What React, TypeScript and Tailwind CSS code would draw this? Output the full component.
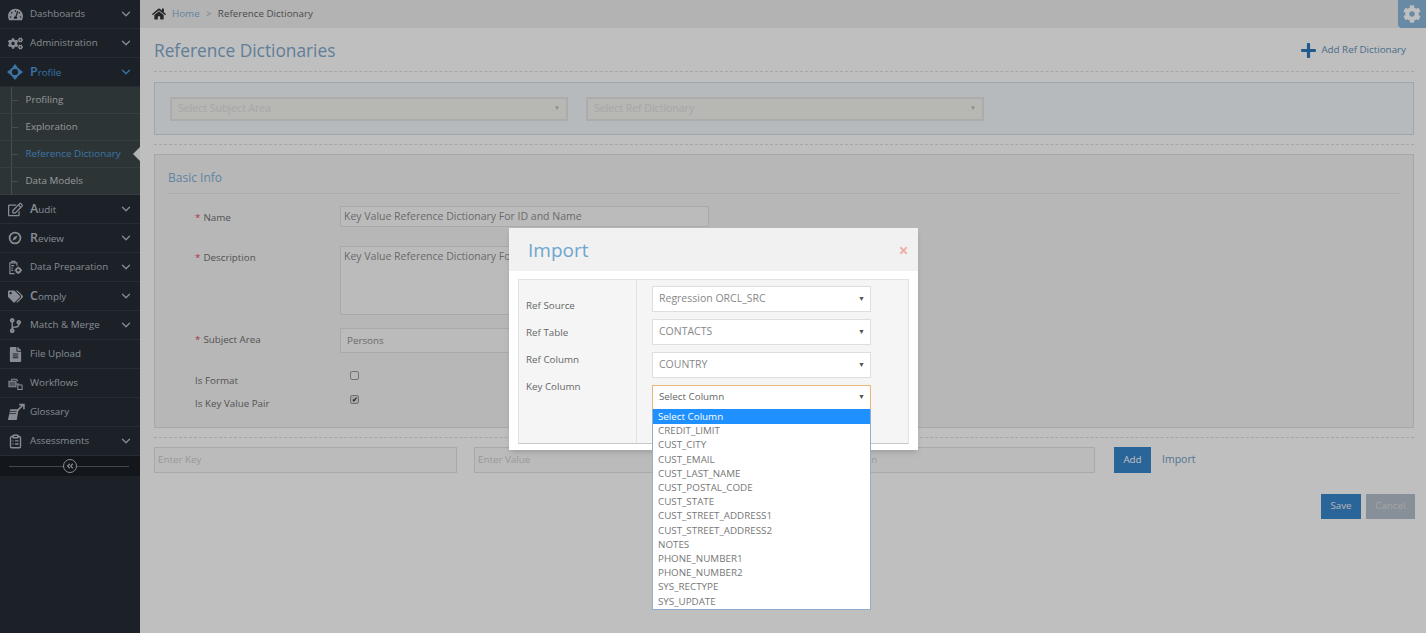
import { ChevronDown, ClipboardList } from 'lucide-react';
import {
  FaCodeBranch, FaCog, FaCogs, FaFileAlt, FaHome, FaPlus, FaRegEdit, FaTachometerAlt, FaTags, FaAngleDoubleLeft, FaTimes,
} from 'react-icons/fa';
import type { ReactNode } from 'react';

const font = { fontFamily: '"Open Sans", "Noto Sans", sans-serif' };

function ProfileIcon() {
  return (
    <svg viewBox="0 0 16 16" className="h-[16px] w-[16px] text-[#4f9bdc]" fill="none" stroke="currentColor">
      <circle cx="8" cy="8" r="4.200" strokeWidth="2.200" />
      <path d="M8 0 10.500 3h-5zM8 16l-2.500-3h5zM0 8l3-2.500v5zM16 8l-3 2.500v-5z" fill="currentColor" stroke="none" />
    </svg>
  );
}

function ReviewIcon() {
  return (
    <svg viewBox="0 0 16 16" className="h-[14px] w-[14px]" fill="none" stroke="currentColor">
      <circle cx="8" cy="8" r="6.200" strokeWidth="2" />
      <path d="M11 5 9.200 9.200 5 11l1.800-4.200z" fill="currentColor" stroke="none" />
    </svg>
  );
}

function DataPrepIcon() {
  return (
    <svg viewBox="0 0 16 16" className="h-[15px] w-[15px]" fill="none" stroke="currentColor" strokeWidth="1.200">
      <path d="M7 14.500H2V3h7.500v3" />
      <path d="M4 3V1.500h3.500V3" />
      <path d="M3.500 6h3M3.500 8.500h2M3.500 11h2" />
      <circle cx="11" cy="11" r="2.300" strokeWidth="2" />
      <path d="M11 7v1M11 14v1M7 11h1M14 11h1" strokeWidth="1.600" />
    </svg>
  );
}

function WorkflowIcon() {
  return (
    <svg viewBox="0 0 16 16" className="h-[15px] w-[15px]" fill="none" stroke="currentColor" strokeWidth="1.100">
      <path d="M1 5.500h7.500v6H1z" fill="currentColor" fillOpacity="0.5" />
      <path d="M4 5.500V3.500h5l1.500 2" />
      <path d="M10.500 9.500h4.500v5h-4.500z" />
      <path d="M8.500 8.500h3v1" />
    </svg>
  );
}

function GlossaryIcon() {
  return (
    <svg viewBox="0 0 18 18" className="h-[19px] w-[19px]" fill="none" stroke="currentColor">
      <path d="M4 6h8l-1.800 10H1.800z" fill="currentColor" stroke="none" />
      <path d="M3.500 8h6.500M3 10h6.500" stroke="#252c34" strokeWidth="0.700" />
      <path d="M11 7l5-5M12.500 1.500H17V6" strokeWidth="1.500" />
    </svg>
  );
}

function MenuItem({ icon, label, big, open, chevron = true }: { icon: ReactNode; label: string; big?: boolean; open?: boolean; chevron?: boolean }) {
  return (
    <div className={`flex h-[29px] items-center border-b border-[#333b44] pl-[4px] pr-[7px] ${open ? 'text-[#4f9bdc]' : 'text-[#b4bcc4]'}`}>
      <span className="flex w-[22px] justify-center text-[15px]">{icon}</span>
      <span className={`ml-[4px] flex-1 text-[9.800px] ${big ? 'first-letter:text-[12.500px] first-letter:font-semibold' : ''}`}>{label}</span>
      {chevron && <ChevronDown size={14} strokeWidth={2.200} />}
    </div>
  );
}

function SubItem({ label, active }: { label: string; active?: boolean }) {
  return (
    <div className={`relative flex h-[27px] items-center border-b border-[#4a5358] pl-[25.500px] text-[9.800px] ${active ? 'text-[#4f9bdc]' : 'text-[#c6cccc]'}`}>
      <span className="absolute left-[12px] top-[13px] h-px w-[6px] bg-[#5f686c]" />
      {label}
      {active && <span className="absolute right-0 top-[6px] border-y-[7px] border-r-[7px] border-y-transparent border-r-[#efefef]" />}
    </div>
  );
}

function FormRow({ label, required, className, children }: { label: string; required?: boolean; className: string; children: ReactNode }) {
  return (
    <div className={`flex items-start ${className}`}>
      <div className="w-[172px] pl-[27px] pt-[5px] text-[9.800px] text-[#6e6e6e]">
        {required && <span className="mr-[3px] text-[#e0455a]">*</span>}
        {label}
      </div>
      {children}
    </div>
  );
}

function ModalSelect({ value, focus }: { value: string; focus?: boolean }) {
  return (
    <div className={`flex w-[219px] items-center justify-between border bg-white pl-[6px] pr-[5px] ${focus ? 'h-[25px] border-[#e9b878] text-[9.800px] text-[#666]' : 'h-[26px] border-[#dedede] text-[10.500px] text-[#888]'}`}>
      {value}
      <span className="text-[7px] text-[#555]">▼</span>
    </div>
  );
}

const columns = [
  'CREDIT_LIMIT', 'CUST_CITY', 'CUST_EMAIL', 'CUST_LAST_NAME', 'CUST_POSTAL_CODE', 'CUST_STATE',
  'CUST_STREET_ADDRESS1', 'CUST_STREET_ADDRESS2', 'NOTES', 'PHONE_NUMBER1', 'PHONE_NUMBER2', 'SYS_RECTYPE', 'SYS_UPDATE',
];

export default function App() {
  return (
    <div className="relative flex h-[633px] w-[1426px] overflow-hidden bg-white" style={font}>
      <aside className="w-[140px] shrink-0 bg-[#252c34]">
        <MenuItem icon={<FaTachometerAlt />} label="Dashboards" />
        <MenuItem icon={<FaCogs />} label="Administration" />
        <MenuItem icon={<ProfileIcon />} label="Profile" big open />
        <div className="relative bg-[#3d4649]">
          <span className="absolute bottom-0 left-[11px] top-0 w-px bg-[#5f686c]" />
          <SubItem label="Profiling" />
          <SubItem label="Exploration" />
          <SubItem label="Reference Dictionary" active />
          <SubItem label="Data Models" />
        </div>
        <MenuItem icon={<FaRegEdit />} label="Audit" big />
        <MenuItem icon={<ReviewIcon />} label="Review" big />
        <MenuItem icon={<DataPrepIcon />} label="Data Preparation" />
        <MenuItem icon={<FaTags />} label="Comply" big />
        <MenuItem icon={<FaCodeBranch />} label="Match & Merge" />
        <MenuItem icon={<FaFileAlt />} label="File Upload" chevron={false} />
        <MenuItem icon={<WorkflowIcon />} label="Workflows" chevron={false} />
        <MenuItem icon={<GlossaryIcon />} label="Glossary" chevron={false} />
        <MenuItem icon={<ClipboardList size={15} strokeWidth={2.200} />} label="Assessments" />
        <div className="relative flex h-[20px] items-center justify-center bg-[#1a1e24]">
          <span className="absolute left-[9px] right-[11px] top-[10px] h-px bg-[#59616a]" />
          <span className="relative flex h-[14px] w-[14px] items-center justify-center rounded-full border border-[#b4bcc4] bg-[#1a1e24] text-[8px] text-[#b4bcc4]">
            <FaAngleDoubleLeft />
          </span>
        </div>
      </aside>

      <main className="min-w-0 flex-1">
        <div className="flex h-[28px] items-center bg-[#efefef] pl-[12px] text-[9.800px] text-[#666]">
          <FaHome className="text-[14px] text-[#333]" />
          <span className="ml-[6px] text-[#7fb0d8]">Home</span>
          <span className="mx-[6.500px] text-[9px] text-[#aaa]">&gt;</span>
          <span>Reference Dictionary</span>
          <span className="ml-auto flex h-[28px] w-[28px] items-center justify-center rounded-bl-[4px] bg-[#8db9dc] text-[18px] text-white">
            <FaCog />
          </span>
        </div>

        <div className="pl-[14px] pr-[12px]">
          <div className="flex h-[44px] items-center justify-between border-b border-dashed border-[#ddd] pt-[2px]">
            <h1 className="text-[17.300px] text-[#7fa9cc]">Reference Dictionaries</h1>
            <div className="flex items-center gap-[4px] pr-[8px] text-[9.800px] text-[#6390b5]">
              <FaPlus className="text-[17px] text-[#2c78bd]" />
              Add Ref Dictionary
            </div>
          </div>

          <div className="mt-[10px] flex h-[53px] items-center gap-[18px] border border-[#d5dee8] bg-[#f3f8fc] pl-[15px]">
            {['Select Subject Area', 'Select Ref Dictionary'].map((t) => (
              <div key={t} className="flex h-[24px] w-[398px] items-center justify-between border-2 border-[#e6e6e6] bg-[#f4f4f0] px-[6px] text-[10.500px] text-[#e0e0e0]">
                {t}
                <span className="text-[6px] text-[#bbb]">▼</span>
              </div>
            ))}
          </div>

          <div className="mt-[9px] h-[10px] border-t border-dashed border-[#ddd]" />

          <section className="h-[274px] border border-[#e0e0e0] bg-[#f5f5f5] px-[13px]">
            <h2 className="flex h-[39px] items-end border-b border-[#e5e5e5] pb-[6px] text-[12px] text-[#7fb0d8]">Basic Info</h2>
            <FormRow label="Name" required className="mt-[12px]">
              <div className="flex h-[21px] w-[369px] items-center border border-[#e2e2e2] bg-[#fafafa] px-[3px] text-[10.500px] text-[#8e8e8e]">Key Value Reference Dictionary For ID and Name</div>
            </FormRow>
            <FormRow label="Description" required className="mt-[19px]">
              <div className="h-[69px] w-[369px] border border-[#e2e2e2] bg-[#fafafa] px-[3px] pt-[2px] text-[10.500px] text-[#8e8e8e]">Key Value Reference Dictionary For ID and Name</div>
            </FormRow>
            <FormRow label="Subject Area" required className="mt-[13px]">
              <div className="flex h-[25px] w-[369px] items-center border border-[#e2e2e2] bg-[#fafafa] px-[6px] pt-[1px] text-[9.800px] text-[#8e8e8e]">Persons</div>
            </FormRow>
            <FormRow label="Is Format" className="mt-[16px]">
              <span className="ml-[10px] mt-[2px] h-[9px] w-[9px] rounded-[2px] border border-[#999] bg-[#f5f5f5]" />
            </FormRow>
            <FormRow label="Is Key Value Pair" className="mt-[3px]">
              <span className="ml-[10px] mt-[3px] flex h-[9px] w-[9px] items-center justify-center rounded-[2px] border border-[#999] bg-[#dcdcdc] text-[7px] leading-none text-[#222]">✔</span>
            </FormRow>
          </section>

          <div className="mt-[9px] flex items-center border-t border-dashed border-[#ddd] pt-[9px]">
            <div className="mr-[17px] flex h-[26px] w-[303px] items-center border border-[#e2e2e2] bg-[#fafafa] px-[3px] text-[9.800px] text-[#ccc]">Enter Key</div>
            <div className="mr-[17px] flex h-[26px] w-[303px] items-center border border-[#e2e2e2] bg-[#fafafa] px-[3px] text-[9.800px] text-[#ccc]">Enter Value</div>
            <div className="flex h-[26px] w-[301px] items-center border border-[#e2e2e2] bg-[#fafafa] px-[3px] text-[9.800px] text-[#ccc]">Enter Description</div>
            <button className="ml-[19px] h-[26px] w-[37px] bg-[#3987ce] text-[9.800px] text-white">Add</button>
            <span className="ml-[11px] text-[10.500px] text-[#6f9cc4]">Import</span>
          </div>

          <div className="mr-[-1px] mt-[21px] flex justify-end gap-[5px]">
            <button className="h-[25px] w-[40px] bg-[#3987ce] text-[9.800px] text-[#f0f0f0]">Save</button>
            <button className="h-[25px] w-[49px] bg-[#b4c0cd] text-[9.800px] text-[#dddddd]">Cancel</button>
          </div>
        </div>
      </main>

      {/* backdrop + import dialog */}
      <div className="absolute inset-0 bg-black/25" />
      <div className="absolute left-[509px] top-[228px] h-[222px] w-[409px] bg-white shadow-md">
        <div className="flex h-[43px] items-center justify-between bg-[#f1f1f1] pl-[19px] pr-[9px] pt-[1px]">
          <span className="text-[19px] text-[#6da6cf]">Import</span>
          <FaTimes className="text-[11px] text-[#eeb0a4]" />
        </div>
        <div className="mx-[9px] mt-[8px] flex h-[165px] border border-[#e2e2e2] border-b-[#c8c8c8] bg-[#f5f5f5]">
          <div className="w-[118px] border-r border-[#e2e2e2] pl-[7px] pt-[12px] text-[9.800px] leading-[27px] text-[#666]">
            <div>Ref Source</div>
            <div>Ref Table</div>
            <div>Ref Column</div>
            <div>Key Column</div>
          </div>
          <div className="flex flex-col gap-[7px] pl-[15px] pt-[6px]">
            <ModalSelect value="Regression ORCL_SRC" />
            <ModalSelect value="CONTACTS" />
            <ModalSelect value="COUNTRY" />
            <ModalSelect value="Select Column" focus />
          </div>
        </div>
      </div>

      <ul className="absolute left-[652px] top-[409px] w-[219px] border border-t-0 border-[#8faed0] bg-white text-[9.800px] leading-[14.200px] text-[#777]">
        <li className="bg-[#1e90ff] pl-[5px] pt-[1px] text-white">Select Column</li>
        {columns.map((c) => (
          <li key={c} className="pl-[5px]">{c}</li>
        ))}
      </ul>
    </div>
  );
}
